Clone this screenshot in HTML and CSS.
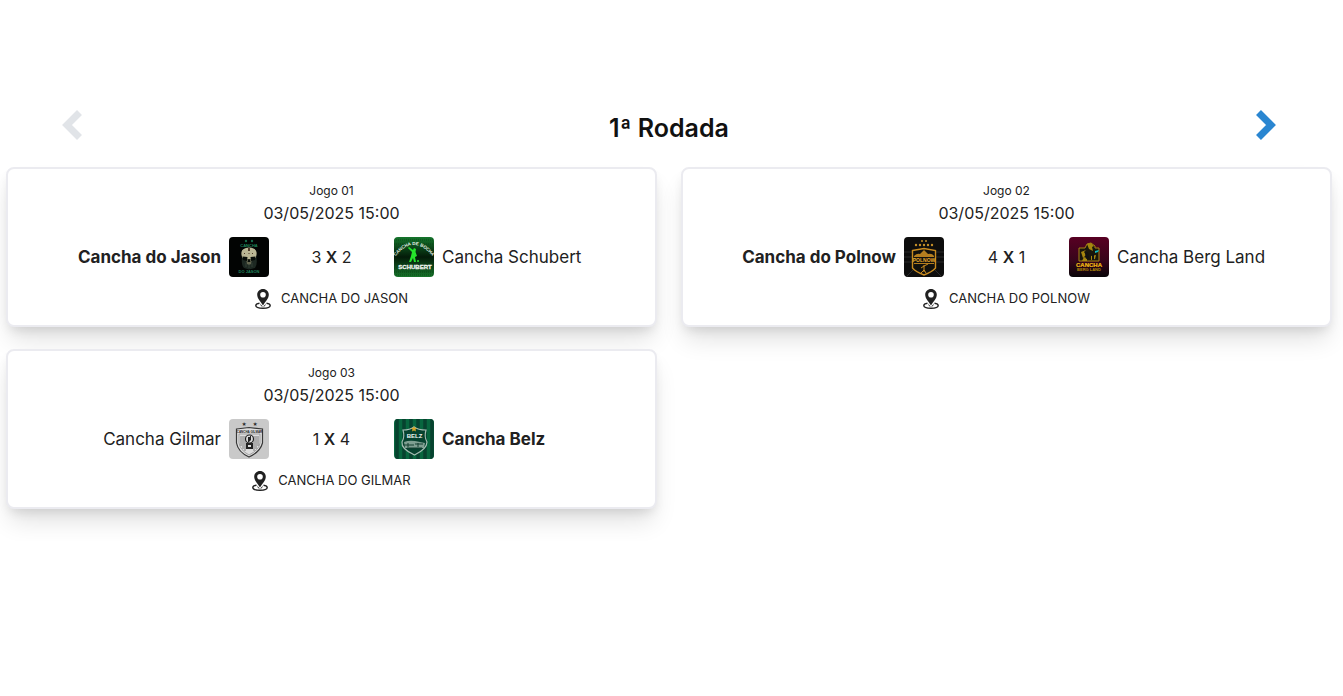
FILE: index.html
```html
<!DOCTYPE html>
<html lang="pt-BR">
<head>
<meta charset="utf-8">
<meta name="viewport" content="width=device-width, initial-scale=1">
<title>1ª Rodada</title>
<link rel="stylesheet" href="styles.css">
</head>
<body>
<svg class="defs" aria-hidden="true">
  <defs>
    <symbol id="pin" viewBox="0 0 16 20">
      <path fill="currentColor" fill-rule="evenodd" d="M8 0C4.700 0 2.200 2.500 2.200 5.700C2.200 9.500 5.500 12 8 16.500C10.500 12 13.800 9.500 13.800 5.700C13.800 2.500 11.300 0 8 0ZM8 3A2.800 2.800 0 1 1 8 8.600A2.800 2.800 0 0 1 8 3Z"/>
      <path fill="none" stroke="currentColor" stroke-width="1.400" d="M4.500 14.200C2.300 14.500.8 15.400.8 16.500C.8 18.200 4 19.200 8 19.200S15.200 18.200 15.200 16.500C15.200 15.400 13.700 14.500 11.500 14.200"/>
      <path fill="currentColor" d="M5 14.500L8 18L11 14.500L10 17L8 18L6 17Z"/>
    </symbol>
  </defs>
</svg>
<main class="round">
  <header class="round-header">
    <button class="nav nav-prev" type="button" aria-label="Rodada anterior" disabled>
      <svg viewBox="0 0 20 30"><path d="M17.500 2.500L5 15L17.500 27.500"/></svg>
    </button>
    <h1 class="title">1ª Rodada</h1>
    <button class="nav" type="button" aria-label="Próxima rodada">
      <svg viewBox="0 0 20 30"><path d="M2.500 2.500L15 15L2.500 27.500"/></svg>
    </button>
  </header>
  <section class="games">
    <article class="card">
      <p class="game">Jogo 01</p>
      <p class="date">03/05/2025 15:00</p>
      <div class="match">
        <div class="team home winner"><span>Cancha do Jason</span>
          <svg class="badge" viewBox="0 0 40 40" aria-hidden="true">
            <rect width="40" height="40" fill="#020403"/>
            <g fill="#176b4a"><circle cx="17" cy="4" r="1.200"/><circle cx="23" cy="4" r="1.200"/></g>
            <text class="tag" x="20" y="10" font-size="4" text-anchor="middle" fill="#20865e">CANCHA</text>
            <text class="tag" x="20" y="36" font-size="4" text-anchor="middle" fill="#20865e">DO JASON</text>
            <path fill="#1d2822" d="M13 20Q12 28 15 31L20 32.500L26 31Q29 27 27 18Z"/>
            <path fill="#bbb795" d="M12.500 15Q13 11 20 10.500Q27 11 27.500 15Q28 18 26.500 21L20 23L13.500 21Q12 18 12.500 15Z"/>
            <path fill="#646650" d="M17 22h6l-1 5l-2 1l-2-1z"/>
            <path fill="#4f3b29" d="M19 11h2v3h-2zM15 16h1v1h-1zM23 16h1v1h-1zM19.500 16h1v1h-1z"/>
            <path fill="#080d09" d="M13.500 19.500L18.500 20L18 24L14 23ZM26.500 19.500L21.500 20L22 24L26 23ZM19.500 22h1l1 3h-3z"/>
            <path stroke="#39443a" stroke-width=".8" d="M17 26v4M20 27v4M23 26v4"/>
          </svg>
        </div>
        <div class="score">3 <b>X</b> 2</div>
        <div class="team">
          <svg class="badge" viewBox="0 0 40 40" aria-hidden="true">
            <defs><linearGradient id="green" x2="0" y2="1"><stop stop-color="#15752c"/><stop offset=".5" stop-color="#031b09"/><stop offset="1" stop-color="#18752b"/></linearGradient></defs>
            <rect width="40" height="40" fill="url(#green)"/>
            <path stroke="#04300f" stroke-width=".5" stroke-dasharray="1 1" d="M0 3h40M0 7h40M0 31h40M0 35h40M0 38h40"/>
            <path id="schubertTop" fill="none" d="M1 20Q20 -4 39 20"/>
            <text class="tag" font-size="4.500" fill="#e9f3e9"><textPath href="#schubertTop" startOffset="50%" text-anchor="middle">CANCHA DE BOCHA</textPath></text>
            <path fill="#25e52b" d="M20 11l2 1l-.5 3l1.500 4l-2 1l1 5h-2l-1-4l-2 4h-2l2-6l1-4l-4-4l1-1l4 3z"/><circle cx="24" cy="24" r="1" fill="#32e435"/>
            <text class="tag" x="21" y="32" font-size="6" text-anchor="middle" fill="#f1f5f1" stroke="#f1f5f1" stroke-width=".3">SCHUBERT</text>
          </svg>
          <span>Cancha Schubert</span></div>
      </div>
      <p class="place"><svg aria-hidden="true"><use href="#pin"/></svg><span>CANCHA DO JASON</span></p>
    </article>

    <article class="card">
      <p class="game">Jogo 02</p>
      <p class="date">03/05/2025 15:00</p>
      <div class="match">
        <div class="team home winner"><span>Cancha do Polnow</span>
          <svg class="badge" viewBox="0 0 40 40" aria-hidden="true">
            <rect width="40" height="40" fill="#0d0d0d"/>
            <path stroke="#2b2b2b" d="M0 15h8M0 20h8M0 25h8M32 15h8M32 20h8M32 25h8M2 40L10 32M30 32L38 40"/>
            <g fill="#c48f28"><circle cx="18" cy="4" r="1"/><circle cx="22" cy="4" r="1"/><circle cx="12" cy="8" r="1.200"/><circle cx="16" cy="8" r="1.200"/><circle cx="20" cy="8" r="1.200"/><circle cx="24" cy="8" r="1.200"/><circle cx="28" cy="8" r="1.200"/></g>
            <path fill="#11100d" stroke="#c98b20" stroke-width="1.400" d="M8.500 13.500L20 11.500L31.500 13.500V31Q28 35 20 38Q12 35 8.500 31Z"/>
            <path fill="#b57e1f" d="M10 19Q13 16 16 17L20 13L24 17Q28 16 30 19V20H10ZM10 26h20v1H10z"/>
            <text class="tag" x="20" y="25" font-size="5" text-anchor="middle" fill="#eaab2d">POLNOW</text>
            <path stroke="#c98b20" fill="none" d="M20 28v7M17 31l3-2l4-2M17 36l3-3l2 3"/>
          </svg>
        </div>
        <div class="score">4 <b>X</b> 1</div>
        <div class="team">
          <svg class="badge" viewBox="0 0 40 40" aria-hidden="true">
            <defs><linearGradient id="wine" x2="0" y2="1"><stop stop-color="#580023"/><stop offset=".6" stop-color="#36051a"/><stop offset="1" stop-color="#080508"/></linearGradient></defs>
            <rect width="40" height="40" fill="url(#wine)"/>
            <path fill="#19160c" stroke="#a98314" d="M10 11h6l2-4l4-1l4 3v2h4v13H10z"/>
            <path fill="#a5860f" d="M18 7l4-1l3 3l-2 1l1 4l-4-2zM12 15l5-2l-2 2l2 3l-3 3zM22 19l5-1l-1 4l-4 1zM15 20l3 1v3h-5z"/>
            <path fill="#111" d="M16 16l3-1l1 6l-3 1zM23 18l2-1v6h-2z"/>
            <path fill="#12bbc2" d="M26 14l4-1l-1 2l-3 1z"/>
            <text class="tag" x="20" y="30" font-size="6" text-anchor="middle" fill="#f0bd13" stroke="#f0bd13" stroke-width=".2">CANCHA</text>
            <text class="tag" x="20" y="34" font-size="4" text-anchor="middle" fill="#b68b0c">BERG LAND</text>
          </svg>
          <span>Cancha Berg Land</span></div>
      </div>
      <p class="place"><svg aria-hidden="true"><use href="#pin"/></svg><span>CANCHA DO POLNOW</span></p>
    </article>

    <article class="card">
      <p class="game">Jogo 03</p>
      <p class="date">03/05/2025 15:00</p>
      <div class="match">
        <div class="team home"><span>Cancha Gilmar</span>
          <svg class="badge" viewBox="0 0 40 40" aria-hidden="true">
            <rect width="40" height="40" fill="#c9c9c9"/>
            <text x="15" y="7" font-size="5" text-anchor="middle" fill="#292929">★</text><text x="26" y="7" font-size="5" text-anchor="middle" fill="#292929">★</text>
            <path fill="#ddd" stroke="#383838" stroke-width="1.200" d="M7.500 10L20 8.500L33.500 10V24Q31 33 20 38Q9 33 7.500 24Z"/>
            <path fill="none" stroke="#888" stroke-width=".7" d="M10 15V24Q11 31 20 36Q30 31 31 24V15Z"/>
            <text class="tag" x="20.500" y="14" font-size="3" text-anchor="middle" fill="#222">CANCHA GILMAR</text>
            <path stroke="#666" stroke-width=".8" d="M12 17v10M14 17v13M16 17v15M25 17v15M27 17v13M29 17v10"/>
            <circle cx="20.500" cy="20" r="4" fill="#dedede" stroke="#222" stroke-width="1.200"/>
            <path fill="#222" d="M19 18h2v-1h1v4l-2 2h-1zM17 24h7v6h-7z"/><path fill="#ddd" d="M19 26h3v2h-3z"/>
          </svg>
        </div>
        <div class="score">1 <b>X</b> 4</div>
        <div class="team winner">
          <svg class="badge" viewBox="0 0 40 40" aria-hidden="true">
            <rect width="40" height="40" fill="#08663f"/>
            <path stroke="#07422f" stroke-width="3.500" d="M3 0v40M10 0v40M17 0v40M24 0v40M31 0v40M38 0v40"/>
            <path fill="#07422f" stroke="#a5bdb3" stroke-width="1.200" d="M9 11Q16 11 20 8Q24 11 32 11Q30 18 33 23Q33 30 20.500 36Q7 30 8 23Q11 18 9 11Z"/>
            <path fill="#d5a629" d="M20 7l1 2h2l-1.500 1.500l.5 2l-2-1l-2 1l.5-2L17 9h2z"/>
            <text class="tag" x="20.500" y="19" font-size="6" text-anchor="middle" fill="#f1f5f2">BELZ</text>
            <path fill="#7f9f91" d="M10 23q5-2 11-1l10 2l-1 5H11z"/><path stroke="#143f30" fill="none" d="M10 26h10M21 25h8M13 29h15M14 24v4M24 24v4"/>
          </svg>
          <span>Cancha Belz</span></div>
      </div>
      <p class="place"><svg aria-hidden="true"><use href="#pin"/></svg><span>CANCHA DO GILMAR</span></p>
    </article>
  </section>
</main>
</body>
</html>
```

FILE: styles.css
```css
* { box-sizing: border-box; }
body {
  margin: 0;
  background: #fff;
  color: #212121;
  font-family: Inter, "Open Sans", sans-serif;
}
p, h1 { margin: 0; }
.defs { position: absolute; width: 0; height: 0; }
.round { padding: 108px 11px 32px 6px; }
.round-header {
  display: flex;
  justify-content: space-between;
  align-items: flex-start;
  padding: 0 56px;
  height: 59px;
}
.title {
  margin-top: 4px;
  color: #111;
  font-size: 25px;
  font-weight: 600;
  line-height: 32px;
}
.nav {
  display: flex;
  padding: 2px 0;
  border: 0;
  background: none;
  color: #2a86d1;
  cursor: pointer;
}
.nav-prev { color: #e1e4e8; cursor: default; }
.nav svg { width: 20px; height: 30px; }
.nav path { fill: none; stroke: currentColor; stroke-width: 7; }
.games {
  display: grid;
  grid-template-columns: repeat(2, minmax(0, 1fr));
  gap: 22px 24px;
}
.card {
  display: flex;
  flex-direction: column;
  align-items: center;
  padding: 12px 8px 16px;
  border: 2px solid #ebebf0;
  border-radius: 8px;
  background: #fff;
  box-shadow: 0 16px 24px -4px rgba(0, 0, 0, .12), 0 6px 12px -4px rgba(0, 0, 0, .12);
}
.game { font-size: 12px; font-weight: 400; line-height: 20px; }
.date { font-size: 16px; font-weight: 400; line-height: 24px; }
.match {
  display: grid;
  grid-template-columns: 1fr 125px 1fr;
  align-items: center;
  width: 100%;
  margin-top: 12px;
}
.team {
  display: flex;
  align-items: center;
  gap: 8px;
  font-size: 17px;
  line-height: 24px;
}
.home { justify-content: flex-end; }
.winner { font-weight: 700; }
.badge { flex: none; width: 40px; height: 40px; border-radius: 4px; }
.tag { font-family: "Liberation Sans", sans-serif; font-weight: 700; }
.score { text-align: center; font-size: 16px; font-weight: 400; line-height: 24px; }
.score b { font-weight: 600; }
.place {
  display: flex;
  align-items: center;
  gap: 10px;
  margin-top: 10px;
  font-size: 13px;
  line-height: 22px;
}
.place svg { width: 16px; height: 20px; margin-top: 2px; }
@media (max-width: 900px) {
  .games { grid-template-columns: 1fr; }
  .round-header { padding: 0 16px; }
}
```
